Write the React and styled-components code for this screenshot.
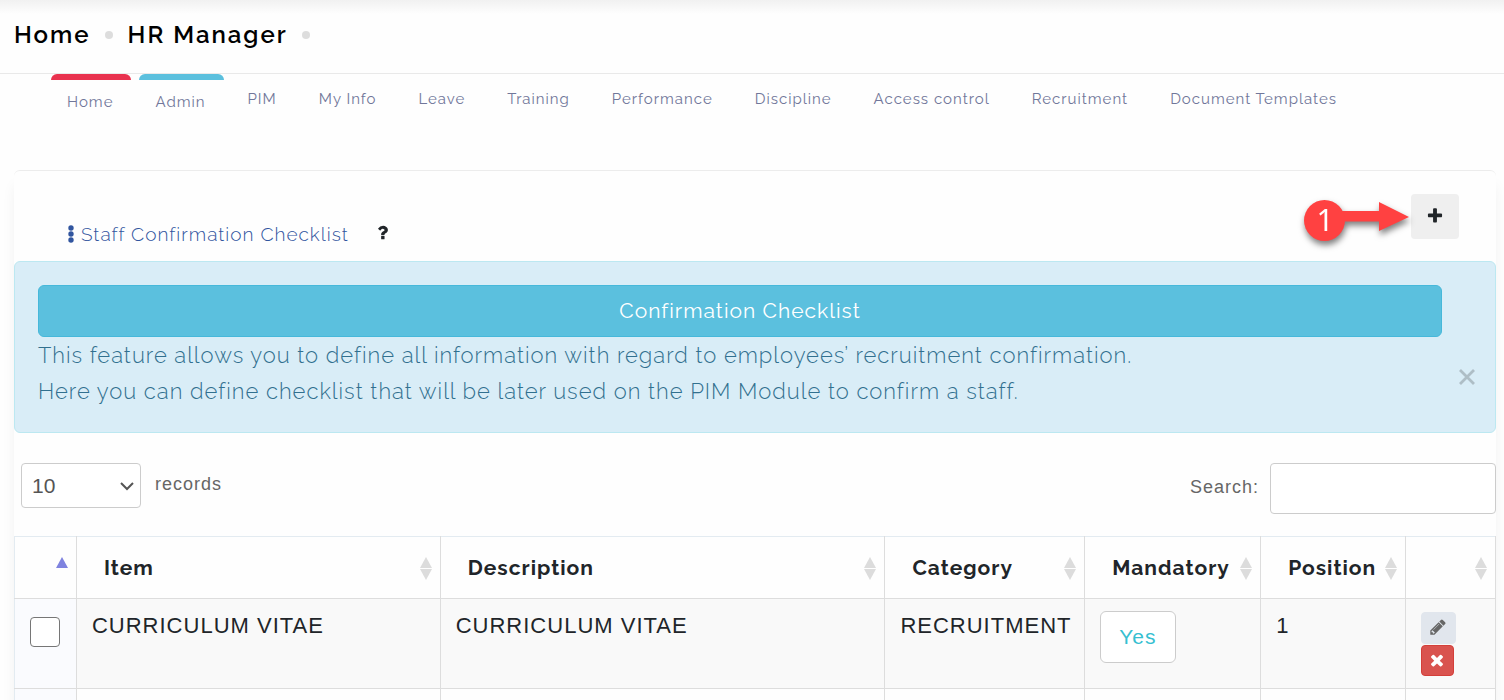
import React from "react"
import styled, {createGlobalStyle} from "styled-components"

const heading = `Raleway, Lato, sans-serif`

const GlobalStyle = createGlobalStyle`
    * {
        box-sizing: border-box;
    }

    body {
        margin: 0;
        background: #fefefe;
        color: #212529;
        font-family: "Liberation Sans", Arial, sans-serif;
        font-size: 21px;
        letter-spacing: 1px;
    }

    button,
    input,
    select {
        font: inherit;
        letter-spacing: inherit;
    }
`

const Page = styled.div`
    height: 100vh;
    overflow: hidden;
`

const Header = styled.header`
    padding: 17px 14px 20px;
    border-bottom: 1px solid #e9e9e9;
    background: linear-gradient(#f1f1f1, #fefefe 14px);
`

const Crumbs = styled.ol`
    display: flex;
    align-items: center;
    gap: 15px;
    margin: 0;
    padding: 0;
    list-style: none;
    font: 600 24px/36px ${heading};
    letter-spacing: 2px;
`

const Crumb = styled.li`
    display: flex;
    align-items: center;
    gap: 14px;

    a {
        color: #000;
        text-decoration: none;
    }

    &::after {
        content: "";
        width: 8px;
        height: 8px;
        border-radius: 50%;
        background: #ddd;
    }
`

const Nav = styled.nav`
    display: flex;
    align-items: flex-start;
    gap: 8px;
    min-height: 96px;
    padding: 0 51px;
`

const NavLink = styled.a`
    padding: ${({$accent}) => ($accent ? "10px" : "13px")} 18px 0 16px;
    border-top: ${({$accent}) => ($accent ? `6px solid ${$accent}` : "0")};
    border-radius: 6px 6px 0 0;
    color: #71779a;
    font: 400 15px/24px ${heading};
    text-decoration: none;
    white-space: nowrap;
`

const Panel = styled.main`
    margin: 0 8px 0 14px;
    border-top: 1px solid #ececec;
    border-radius: 6px;
    box-shadow: 0 14px 14px rgba(0, 0, 0, 0.05);
`

const PanelHeader = styled.div`
    display: flex;
    align-items: flex-start;
    justify-content: space-between;
    padding: 23px 37px 15px 53px;
`

const Title = styled.h1`
    display: flex;
    align-items: center;
    gap: 7px;
    margin: 28px 0 0;
    color: #31559f;
    font: 300 19px/24px ${heading};
`

const HelpButton = styled.button`
    display: flex;
    margin-left: 17px;
    padding: 0 0 3px;
    border: 0;
    background: none;
    color: #212529;
`

const AddWrapper = styled.div`
    position: relative;
`

const AddButton = styled.button`
    display: grid;
    place-items: center;
    width: 48px;
    height: 45px;
    padding: 0 0 2px;
    border: 0;
    border-radius: 4px;
    background: #efefef;
    color: #212529;
`

const Callout = styled.svg`
    position: absolute;
    top: 0;
    right: 48px;
    filter: drop-shadow(1px 4px 3px rgba(0, 0, 0, 0.5));
`

const Alert = styled.section`
    display: flex;
    padding: 23px 3px 23px 23px;
    border: 1px solid #bce8f1;
    border-radius: 6px;
    background: #d9edf7;
    color: #31708f;
    font-family: ${heading};
    line-height: 36px;

    p {
        margin: 0;
        font-size: 22px;
        font-weight: 300;
    }
`

const AlertBody = styled.div`
    flex: 1;
`

const AlertButton = styled.button`
    width: 100%;
    height: 52px;
    border: 1px solid #46b8da;
    border-radius: 6px;
    background: #5bc0de;
    color: #fff;
`

const CloseButton = styled.button`
    display: grid;
    place-items: center;
    align-self: flex-end;
    width: 50px;
    height: 24px;
    margin-bottom: 20px;
    padding: 0;
    border: 0;
    background: none;
    color: #aebec6;
`

const Controls = styled.div`
    display: flex;
    align-items: flex-start;
    justify-content: space-between;
    padding: 30px 0 22px 7px;
    color: #666;
    font-size: 18px;
`

const Length = styled.label`
    display: flex;
    gap: 14px;
    line-height: 42px;
`

const SelectBox = styled.span`
    display: grid;
    align-items: center;

    > * {
        grid-area: 1 / 1;
    }

    svg {
        justify-self: end;
        margin-right: 7px;
        pointer-events: none;
    }
`

const Select = styled.select`
    appearance: none;
    width: 120px;
    height: 45px;
    padding: 0 10px;
    border: 1px solid #ccc;
    border-radius: 4px;
    background: #fff;
    color: #555;
    font-size: 21px;
    letter-spacing: 0;
`

const Search = styled.label`
    display: flex;
    gap: 11px;
    line-height: 48px;
`

const SearchInput = styled.input`
    width: 226px;
    height: 51px;
    border: 1px solid #ccc;
    border-radius: 4px;
    background: #fff;
`

const Table = styled.table`
    width: 100%;
    table-layout: fixed;
    border-collapse: collapse;
    border: 1px solid #e3ebf1;
`

const Th = styled.th`
    height: 62px;
    padding: 0 7px 0 27px;
    border: 1px solid #ddd;
    border-top-color: #e3ebf1;
    text-align: left;
    font: 700 21px/30px ${heading};

    &:first-child {
        border-left-color: #e3ebf1;
    }
`

const ThContent = styled.div`
    display: flex;
    align-items: center;
    justify-content: space-between;

    svg {
        flex: none;
        margin-left: auto;
    }
`

const Td = styled.td`
    height: 90px;
    padding: 12px 15px;
    border: 1px solid #ddd;
    vertical-align: top;
    font-size: 22px;
    line-height: 30px;
    white-space: nowrap;
`

const Row = styled.tr`
    background: ${({$striped}) => ($striped ? "#f9f9f9" : "#fefefe")};

    ${Td}:first-child {
        border-left-color: #e3ebf1;
        background: #fafbfe;
    }
`

const Checkbox = styled.input`
    appearance: none;
    display: block;
    width: 30px;
    height: 30px;
    margin: 6px 0 0;
    border: 1px solid #767676;
    border-radius: 4px;
    background: #fff;
`

const YesButton = styled.button`
    height: 52px;
    padding: 0 18px;
    border: 1px solid #ccc;
    border-radius: 6px;
    background: #fff;
    color: #36bfd1;
    font-size: 21px;
`

const RowActions = styled.div`
    display: flex;
    flex-direction: column;
    align-items: flex-start;
    gap: 1px;
    padding-top: 1px;
`

const IconButton = styled.button`
    display: grid;
    place-items: center;
    width: ${({$danger}) => ($danger ? "33px" : "35px")};
    height: ${({$danger}) => ($danger ? "31px" : "32px")};
    padding: 0 2px 2px 0;
    border: 1px solid ${({$danger}) => ($danger ? "#d43f3a" : "#e1e6ed")};
    border-radius: 4px;
    background: ${({$danger}) => ($danger ? "#d9534f" : "#e1e6ed")};
    color: ${({$danger}) => ($danger ? "#fff" : "#666")};
`

const paths = {
    plus: "M1600 736v192q0 40-28 68t-68 28h-416v416q0 40-28 68t-68 28h-192q-40 0-68-28t-28-68v-416h-416q-40 0-68-28t-28-68v-192q0-40 28-68t68-28h416v-416q0-40 28-68t68-28h192q40 0 68 28t28 68v416h416q40 0 68 28t28 68z",
    pencil: "M491 1536l91-91-235-235-91 91v107h128v128h107zm523-928q0-22-22-22-10 0-17 7l-542 542q-7 7-7 17 0 22 22 22 10 0 17-7l542-542q7-7 7-17zm-54-192l416 416-832 832h-416v-416zm683 96q0 53-37 90l-166 166-416-416 166-165q36-38 90-38 53 0 91 38l235 234q37 39 37 91z",
    times: "M1490 1322q0 40-28 68l-136 136q-28 28-68 28t-68-28l-294-294-294 294q-28 28-68 28t-68-28l-136-136q-28-28-28-68t28-68l294-294-294-294q-28-28-28-68t28-68l136-136q28-28 68-28t68 28l294 294 294-294q28-28 68-28t68 28l136 136q28 28 28 68t-28 68l-294 294 294 294q28 28 28 68z",
    question: "M1088 1256v240q0 16-12 28t-28 12h-240q-16 0-28-12t-12-28v-240q0-16 12-28t28-12h240q16 0 28 12t12 28zm316-600q0 54-15.5 101t-35 76.5-55 59.5-57.5 43.5-61 35.5q-41 23-68.5 65t-27.5 67q0 17-12 32.5t-28 15.5h-240q-15 0-25.5-18.5t-10.5-37.5v-45q0-83 65-156.5t143-108.5q59-27 84-56t25-76q0-42-46.5-74t-107.5-32q-65 0-108 29-35 25-107 115-13 16-31 16-12 0-25-8l-164-125q-13-10-15.5-25t5.5-28q160-266 464-266 80 0 161 31t146 83 106 127.5 41 158.5z",
}

const Icon = ({name, size}) => (
    <svg width={size} height={size} viewBox="0 0 1792 1792" fill="currentColor" aria-hidden="true">
        <path d={paths[name]} />
    </svg>
)

const Dots = () => (
    <svg width="7" height="18" viewBox="0 0 7 18" fill="currentColor" aria-hidden="true">
        <circle cx="4" cy="3" r="2.7" />
        <circle cx="4" cy="9" r="2.7" />
        <circle cx="4" cy="15" r="2.7" />
    </svg>
)

const SortIcon = ({sorted}) => (
    <svg width="14" height="24" viewBox="0 0 14 24" aria-hidden="true">
        <path d="M7 1l6 11H1z" fill={sorted ? "#7f83df" : "#dcdcdc"} />
        {!sorted && <path d="M7 24L1 13h12z" fill="#dcdcdc" />}
    </svg>
)

const navLinks = [
    {label: "Home", accent: "#e9324f"},
    {label: "Admin", accent: "#5bc0de"},
    {label: "PIM"},
    {label: "My Info"},
    {label: "Leave"},
    {label: "Training"},
    {label: "Performance"},
    {label: "Discipline"},
    {label: "Access control"},
    {label: "Recruitment"},
    {label: "Document Templates"},
]

const columns = [
    {label: "", width: 62, sorted: true},
    {label: "Item", width: 364},
    {label: "Description", width: 445},
    {label: "Category", width: 200},
    {label: "Mandatory", width: 176},
    {label: "Position", width: 145},
    {label: "", width: 90},
]

const totalWidth = columns.reduce((sum, column) => sum + column.width, 0)

const App = () => (
    <Page>
        <GlobalStyle />

        <Header>
            <Crumbs>
                <Crumb><a href="#home">Home</a></Crumb>
                <Crumb><a href="#hr">HR Manager</a></Crumb>
            </Crumbs>
        </Header>

        <Nav>
            {navLinks.map(({label, accent}) => (
                <NavLink key={label} href="#menu" $accent={accent}>
                    {label}
                </NavLink>
            ))}
        </Nav>

        <Panel>
            <PanelHeader>
                <Title>
                    <Dots />
                    Staff Confirmation Checklist
                    <HelpButton aria-label="Help">
                        <Icon name="question" size={19} />
                    </HelpButton>
                </Title>

                <AddWrapper>
                    <AddButton aria-label="Add">
                        <Icon name="plus" size={18} />
                    </AddButton>
                    <Callout width="112" height="50" viewBox="0 0 112 50">
                        <path d="M40 17h40V8l30 15-30 14V27.5H40z" fill="#ff4141" />
                        <circle cx="25.5" cy="26.5" r="20.5" fill="#ff4141" />
                        <text x="26" y="37" fill="#fff" fontFamily="Noto Sans, sans-serif" fontSize="30" letterSpacing="0" textAnchor="middle">
                            1
                        </text>
                    </Callout>
                </AddWrapper>
            </PanelHeader>

            <Alert>
                <AlertBody>
                    <AlertButton>Confirmation Checklist</AlertButton>
                    <p>This feature allows you to define all information with regard to employees’ recruitment confirmation.</p>
                    <p>Here you can define checklist that will be later used on the PIM Module to confirm a staff.</p>
                </AlertBody>
                <CloseButton aria-label="Close">
                    <svg width="16" height="16" viewBox="0 0 16 16" stroke="currentColor" strokeWidth="2.8">
                        <path d="M1 1l14 14M15 1L1 15" />
                    </svg>
                </CloseButton>
            </Alert>

            <Controls>
                <Length>
                    <SelectBox>
                        <Select defaultValue="10">
                            <option>10</option>
                            <option>25</option>
                            <option>50</option>
                        </Select>
                        <svg width="14" height="10" viewBox="0 0 14 10" fill="none" stroke="#555" strokeWidth="2">
                            <path d="M1 2l6 6 6-6" />
                        </svg>
                    </SelectBox>
                    records
                </Length>
                <Search>
                    Search:
                    <SearchInput type="search" />
                </Search>
            </Controls>

            <Table>
                <colgroup>
                    {columns.map(({width}, i) => (
                        <col key={i} style={{width: `${(width / totalWidth) * 100}%`}} />
                    ))}
                </colgroup>
                <thead>
                    <tr>
                        {columns.map(({label, sorted}, i) => (
                            <Th key={i}>
                                <ThContent>
                                    {label}
                                    <SortIcon sorted={sorted} />
                                </ThContent>
                            </Th>
                        ))}
                    </tr>
                </thead>
                <tbody>
                    <Row $striped>
                        <Td><Checkbox type="checkbox" aria-label="Select row" /></Td>
                        <Td>CURRICULUM VITAE</Td>
                        <Td>CURRICULUM VITAE</Td>
                        <Td>RECRUITMENT</Td>
                        <Td><YesButton>Yes</YesButton></Td>
                        <Td>1</Td>
                        <Td>
                            <RowActions>
                                <IconButton aria-label="Edit"><Icon name="pencil" size={18} /></IconButton>
                                <IconButton aria-label="Delete" $danger><Icon name="times" size={18} /></IconButton>
                            </RowActions>
                        </Td>
                    </Row>
                    <Row>
                        {columns.map((column, i) => <Td key={i} />)}
                    </Row>
                </tbody>
            </Table>
        </Panel>
    </Page>
)

export default App
